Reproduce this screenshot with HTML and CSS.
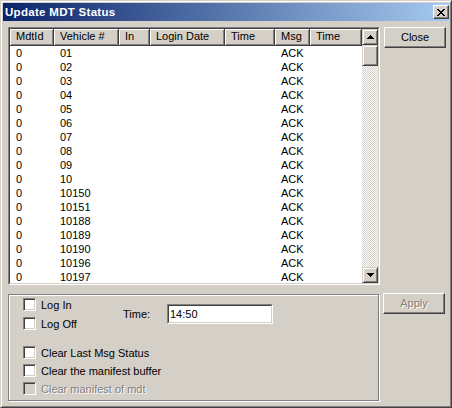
FILE: index.html
```html
<!DOCTYPE html>
<html>
<head>
<meta charset="utf-8">
<link rel="stylesheet" href="styles.css">
</head>
<body>
<div class="window">
  <div class="titlebar">
    <span class="title">Update MDT Status</span>
    <div class="tb-close">
      <svg width="8" height="7" viewBox="0 0 8 7" shape-rendering="crispEdges"><path d="M0 0h2v1H0zM6 0h2v1H6zM1 1h2v1H1zM5 1h2v1H5zM2 2h4v1H2zM3 3h2v1H3zM2 4h4v1H2zM1 5h2v1H1zM5 5h2v1H5zM0 6h2v1H0zM6 6h2v1H6z" fill="#000"/></svg>
    </div>
  </div>
  <div class="client">
    <div class="row">
      <div class="listbox">
        <div class="listinner">
          <div class="listmain">
            <div class="lv-head">
              <div class="hc">MdtId</div>
              <div class="hc">Vehicle #</div>
              <div class="hc">In</div>
              <div class="hc">Login Date</div>
              <div class="hc">Time</div>
              <div class="hc">Msg</div>
              <div class="hc">Time</div>
            </div>
            <div class="lv-body">
              <div class="lr"><span>0</span><span>01</span><span></span><span></span><span></span><span>ACK</span><span></span></div>
              <div class="lr"><span>0</span><span>02</span><span></span><span></span><span></span><span>ACK</span><span></span></div>
              <div class="lr"><span>0</span><span>03</span><span></span><span></span><span></span><span>ACK</span><span></span></div>
              <div class="lr"><span>0</span><span>04</span><span></span><span></span><span></span><span>ACK</span><span></span></div>
              <div class="lr"><span>0</span><span>05</span><span></span><span></span><span></span><span>ACK</span><span></span></div>
              <div class="lr"><span>0</span><span>06</span><span></span><span></span><span></span><span>ACK</span><span></span></div>
              <div class="lr"><span>0</span><span>07</span><span></span><span></span><span></span><span>ACK</span><span></span></div>
              <div class="lr"><span>0</span><span>08</span><span></span><span></span><span></span><span>ACK</span><span></span></div>
              <div class="lr"><span>0</span><span>09</span><span></span><span></span><span></span><span>ACK</span><span></span></div>
              <div class="lr"><span>0</span><span>10</span><span></span><span></span><span></span><span>ACK</span><span></span></div>
              <div class="lr"><span>0</span><span>10150</span><span></span><span></span><span></span><span>ACK</span><span></span></div>
              <div class="lr"><span>0</span><span>10151</span><span></span><span></span><span></span><span>ACK</span><span></span></div>
              <div class="lr"><span>0</span><span>10188</span><span></span><span></span><span></span><span>ACK</span><span></span></div>
              <div class="lr"><span>0</span><span>10189</span><span></span><span></span><span></span><span>ACK</span><span></span></div>
              <div class="lr"><span>0</span><span>10190</span><span></span><span></span><span></span><span>ACK</span><span></span></div>
              <div class="lr"><span>0</span><span>10196</span><span></span><span></span><span></span><span>ACK</span><span></span></div>
              <div class="lr"><span>0</span><span>10197</span><span></span><span></span><span></span><span>ACK</span><span></span></div>
            </div>
          </div>
          <div class="vscroll">
            <div class="sb-btn">
              <svg width="7" height="4" viewBox="0 0 7 4" shape-rendering="crispEdges"><path d="M3 0h1v1h1v1h1v1h1v1H0V3h1V2h1V1h1z" fill="#000"/></svg>
            </div>
            <div class="sb-track"><div class="sb-thumb"></div></div>
            <div class="sb-btn">
              <svg width="7" height="4" viewBox="0 0 7 4" shape-rendering="crispEdges"><path d="M0 0h7v1H6v1H5v1H4v1H3V3H2V2H1V1H0z" fill="#000"/></svg>
            </div>
          </div>
        </div>
      </div>
      <div class="btn">Close</div>
    </div>
    <div class="row row2">
      <div class="group">
        <div class="top">
          <div class="checks">
            <div class="chk"><span class="box"></span><span class="lbl">Log In</span></div>
            <div class="chk"><span class="box"></span><span class="lbl">Log Off</span></div>
          </div>
          <div class="time-lbl">Time:</div>
          <div class="textbox"><div class="textinner">14:50</div></div>
        </div>
        <div class="clears">
          <div class="chk"><span class="box"></span><span class="lbl">Clear Last Msg Status</span></div>
          <div class="chk"><span class="box"></span><span class="lbl">Clear the manifest buffer</span></div>
          <div class="chk disabled"><span class="box"></span><span class="lbl">Clear manifest of mdt</span></div>
        </div>
      </div>
      <div class="btn disabled">Apply</div>
    </div>
  </div>
</div>
</body>
</html>
```
FILE: styles.css
```css
* { box-sizing: border-box; }
html, body { margin: 0; padding: 0; }
body {
  width: 452px;
  height: 408px;
  background: #D4D0C8;
  font-family: "Liberation Sans", Arial, sans-serif;
  font-size: 11px;
  color: #000;
}
.window {
  width: 452px;
  height: 408px;
  background: #D4D0C8;
  border: 1px solid;
  border-color: #D4D0C8 #404040 #404040 #D4D0C8;
  box-shadow: inset 1px 1px 0 #fff, inset -1px -1px 0 #808080;
  padding: 2px;
}
.titlebar {
  height: 18px;
  background: linear-gradient(to right, #0A246A, #A6CAF0);
  display: flex;
  align-items: center;
  justify-content: space-between;
  padding-left: 2px;
}
.title {
  color: #fff;
  font-weight: bold;
  font-size: 11.5px;
  letter-spacing: 0.3px;
}
.tb-close {
  width: 16px;
  height: 14px;
  background: #D4D0C8;
  border: 1px solid;
  border-color: #fff #404040 #404040 #fff;
  box-shadow: inset -1px -1px 0 #808080;
  display: flex;
  align-items: center;
  justify-content: center;
}
.client {
  padding: 6px 0 0 5px;
}
.row {
  display: flex;
  align-items: flex-start;
  gap: 4px;
}
.row2 { margin-top: 8px; }
.listbox {
  width: 372px;
  height: 258px;
  border: 1px solid;
  border-color: #808080 #fff #fff #808080;
}
.listinner {
  height: 100%;
  border: 1px solid;
  border-color: #404040 #D4D0C8 #D4D0C8 #404040;
  background: #fff;
  display: flex;
  overflow: hidden;
}
.listmain {
  flex: 1;
  overflow: hidden;
}
.lv-head, .lr {
  display: grid;
  grid-template-columns: 44px 65px 31px 75px 50px 35px 1fr;
}
.hc {
  height: 17px;
  line-height: 15px;
  background: #D4D0C8;
  border-right: 1px solid #404040;
  border-bottom: 1px solid #404040;
  box-shadow: inset 1px 1px 0 #fff, inset -1px -1px 0 #808080;
  padding-left: 6px;
  white-space: nowrap;
  overflow: hidden;
}
.lr { height: 14px; line-height: 14px; }
.lr span { padding-left: 6px; white-space: nowrap; }
.vscroll {
  width: 16px;
  display: flex;
  flex-direction: column;
}
.sb-btn {
  width: 16px;
  height: 16px;
  flex: none;
  background: #D4D0C8;
  border: 1px solid;
  border-color: #D4D0C8 #404040 #404040 #D4D0C8;
  box-shadow: inset 1px 1px 0 #fff, inset -1px -1px 0 #808080;
  display: flex;
  align-items: center;
  justify-content: center;
}
.sb-track {
  flex: 1;
  background-color: #fff;
  background-image: repeating-conic-gradient(#D4D0C8 0 25%, #fff 0 50%);
  background-size: 2px 2px;
}
.sb-thumb {
  height: 21px;
  background: #D4D0C8;
  border: 1px solid;
  border-color: #D4D0C8 #404040 #404040 #D4D0C8;
  box-shadow: inset 1px 1px 0 #fff, inset -1px -1px 0 #808080;
}
.btn {
  width: 62px;
  height: 21px;
  line-height: 19px;
  text-align: center;
  background: #D4D0C8;
  border: 1px solid;
  border-color: #fff #404040 #404040 #fff;
  box-shadow: inset -1px -1px 0 #808080;
}
.btn.disabled {
  color: #808080;
  text-shadow: 1px 1px 0 #fff;
}
.group {
  width: 371px;
  height: 107px;
  margin-top: 1px;
  border: 1px solid #808080;
  box-shadow: inset 1px 1px 0 #fff, 1px 1px 0 #fff;
  padding: 3px 0 0 14px;
}
.top {
  display: flex;
  align-items: center;
}
.checks {
  width: 100px;
  display: flex;
  flex-direction: column;
  gap: 6px;
}
.chk {
  height: 13px;
  display: flex;
  align-items: center;
}
.box {
  width: 13px;
  height: 13px;
  flex: none;
  background: #fff;
  border: 1px solid;
  border-color: #808080 #fff #fff #808080;
  box-shadow: inset 1px 1px 0 #404040, inset -1px -1px 0 #D4D0C8;
}
.lbl {
  margin-left: 5px;
  white-space: nowrap;
}
.chk.disabled .box { background: #D4D0C8; }
.chk.disabled .lbl {
  color: #808080;
  text-shadow: 1px 1px 0 #fff;
}
.time-lbl {
  width: 44px;
}
.textbox {
  width: 106px;
  height: 20px;
  border: 1px solid;
  border-color: #808080 #fff #fff #808080;
}
.textinner {
  height: 100%;
  border: 1px solid;
  border-color: #404040 #D4D0C8 #D4D0C8 #404040;
  background: #fff;
  padding-left: 1px;
  line-height: 16px;
}
.clears {
  margin-top: 16px;
  display: flex;
  flex-direction: column;
  gap: 5px;
}
```
